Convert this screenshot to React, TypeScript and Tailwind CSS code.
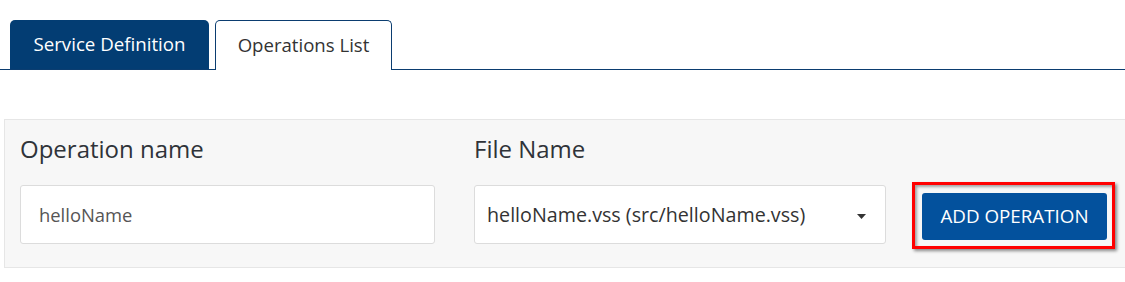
import React from "react";

export default function App() {
  return (
    <div
      className="w-[1125px] h-[282px] bg-white overflow-hidden"
      style={{ fontFamily: '"Open Sans", "Noto Sans", sans-serif' }}
    >
      {/* Tabs */}
      <div className="pt-[20px] pl-[10px] flex items-end border-b border-[#0b3d70]">
        <div className="w-[199px] h-[49px] bg-[#033d73] rounded-t-[5px] flex items-center justify-center pb-[1px] text-white text-[18.7px] leading-none">
          Service Definition
        </div>
        <div className="ml-[6px] w-[177px] h-[50px] -mb-px bg-white border border-b-0 border-[#0b3d70] rounded-t-[5px] flex items-center justify-center pb-[1px] text-[#333] text-[18.6px] leading-none">
          Operations List
        </div>
      </div>

      {/* Panel */}
      <div className="mt-[49px] ml-[4px] w-[1140px] h-[149px] bg-[#f7f7f7] border border-[#e6e6e6] pt-[12px] pl-[15px] flex items-end">
        <div className="w-[415px] flex flex-col pb-[23px]">
          <div className="text-[24px] leading-[32px] text-[#2f3339]">Operation name</div>
          <div className="mt-[20px] h-[59px] bg-white border border-[#dcdcdc] rounded-[3px] flex items-center pl-[18px] text-[18.4px] text-[#555]">
            helloName
          </div>
        </div>
        <div className="ml-[39px] w-[412px] flex flex-col pb-[23px]">
          <div className="text-[24px] leading-[32px] text-[#2f3339]">File Name</div>
          <div className="mt-[20px] h-[59px] bg-white border border-[#dcdcdc] rounded-[3px] flex items-center pl-[12px] pr-[19px] text-[19.7px] text-[#333]">
            <span className="flex-1">helloName.vss (src/helloName.vss)</span>
            <svg width="9" height="5" viewBox="0 0 9 5" className="mt-[4px]">
              <path d="M0 0 L9 0 L4.5 5 Z" fill="#333" />
            </svg>
          </div>
        </div>
        <div className="ml-[26px] mb-[18px] w-[203px] h-[67px] border-[3px] border-[#ff0000] shadow-[2px_2px_3px_rgba(0,0,0,0.45),inset_2px_2px_3px_rgba(0,0,0,0.35)] flex pl-[7px] pt-[8px]">
          <div className="w-[185px] h-[47px] bg-[#03519d] rounded-[3px] flex items-center justify-center text-white text-[18.8px] leading-none">
            ADD OPERATION
          </div>
        </div>
      </div>
    </div>
  );
}
